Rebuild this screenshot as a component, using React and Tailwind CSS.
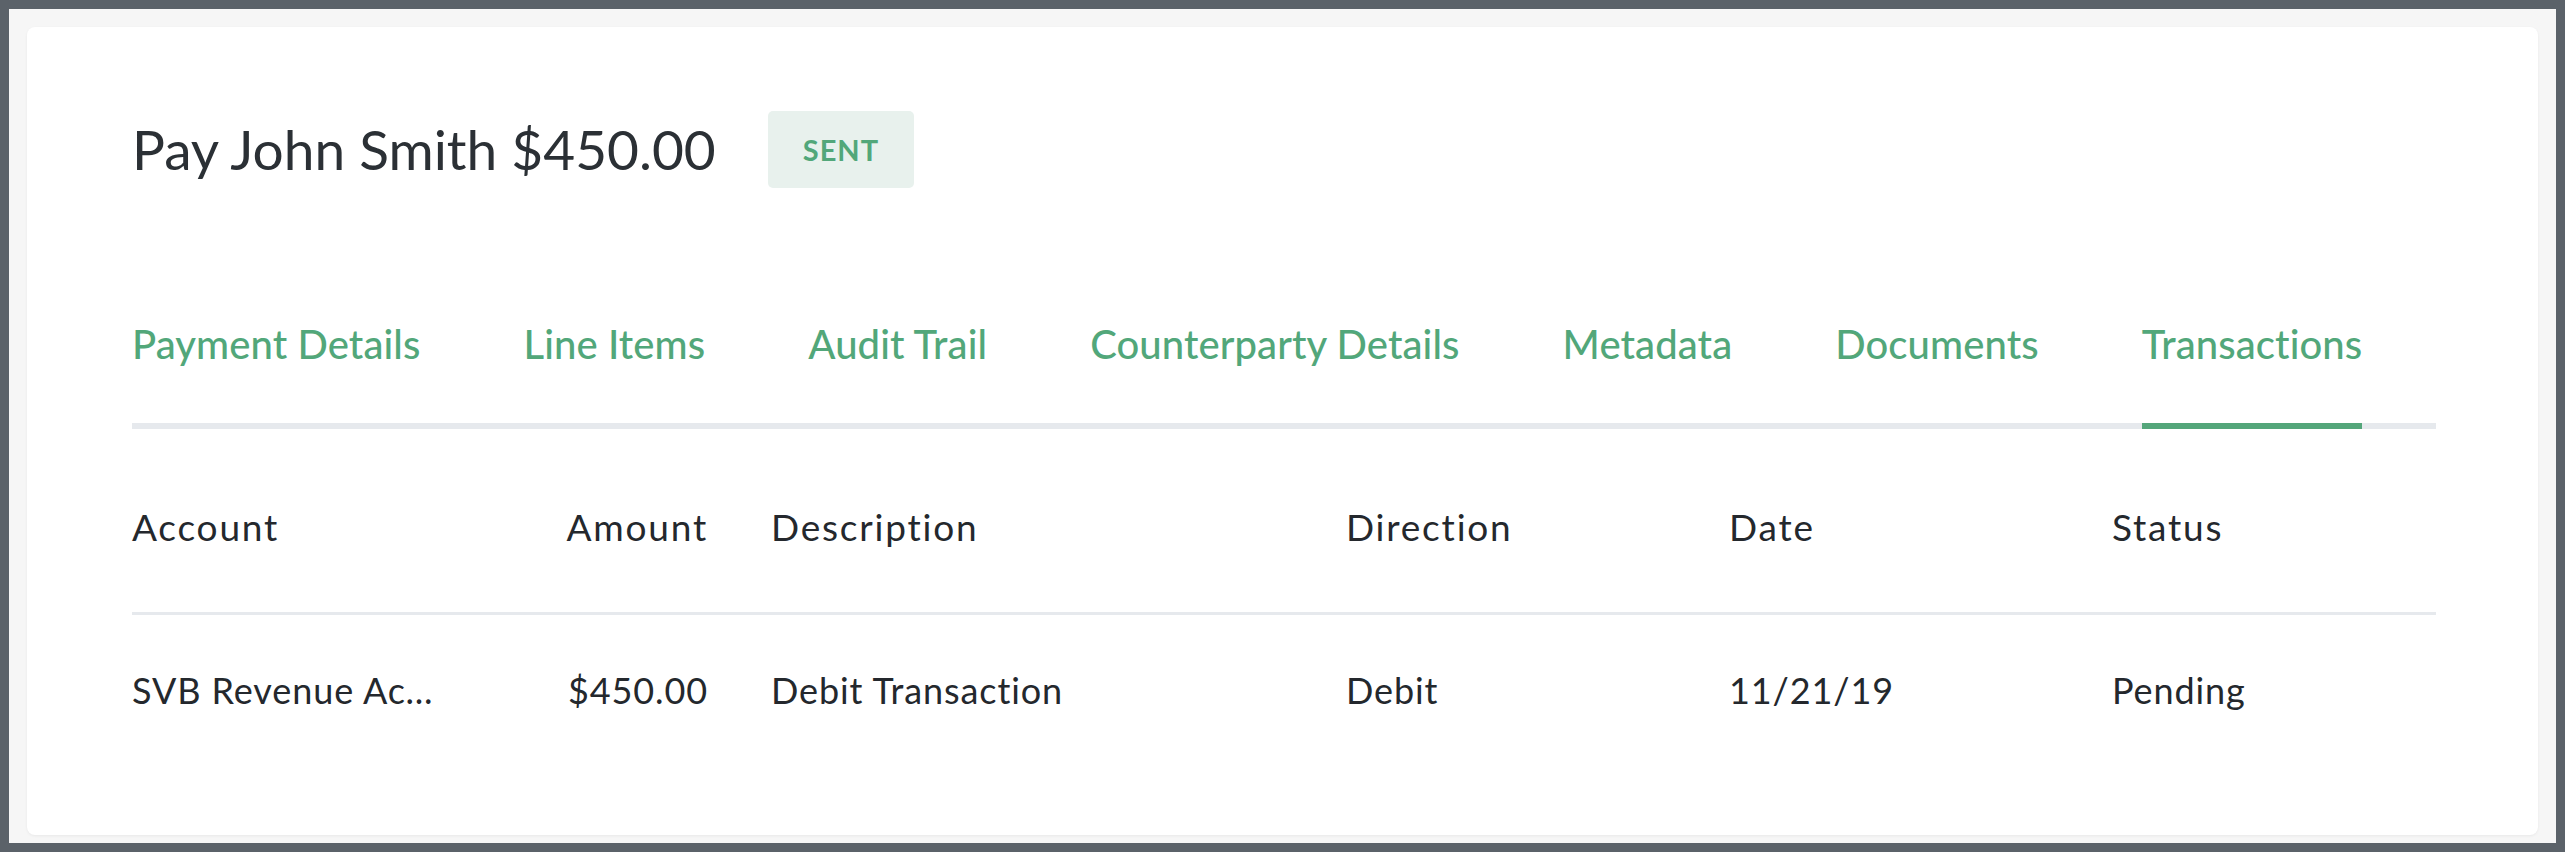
const TABS = [
  "Payment Details",
  "Line Items",
  "Audit Trail",
  "Counterparty Details",
  "Metadata",
  "Documents",
  "Transactions",
];

const COLS = ["Account", "Amount", "Description", "Direction", "Date", "Status"];

const ROWS = [
  {
    account: "SVB Revenue Account",
    amount: "$450.00",
    description: "Debit Transaction",
    direction: "Debit",
    date: "11/21/19",
    status: "Pending",
  },
];

const GRID = "grid grid-cols-[434px_142px_638px_383px_383px_1fr]";

export default function App() {
  return (
    <div
      className="h-[852px] w-full bg-[#5b6269] p-[9px]"
      style={{ fontFamily: "Lato, 'Noto Sans', sans-serif" }}
    >
      <div className="h-full bg-[#f6f6f6] pt-[18px] pl-[18px] pr-[18px] pb-[8px]">
        <div className="h-full rounded-lg bg-white pl-[105px] pr-[102px] pt-[84px] shadow-[0_1px_3px_rgba(0,0,0,0.06)]">
          {/* header */}
          <div className="flex h-[77px] items-center gap-[52px]">
            <h1 className="text-[55px] leading-none font-normal text-[#2b3035]">
              Pay John Smith $450.00
            </h1>
            <span className="flex h-[77px] items-center rounded-[5px] bg-[#e8f1ed] px-[35px] text-[29px] font-bold tracking-[1px] text-[#52a77a]">
              SENT
            </span>
          </div>

          {/* tabs */}
          <nav className="mt-[136px] flex gap-[103px] border-b-[6px] border-[#e6e9ed]">
            {TABS.map((t) => (
              <div
                key={t}
                className={`-mb-[6px] border-b-[6px] pb-[59px] text-[40px] leading-none font-medium tracking-[0.1px] text-[#52a77a] ${
                  t === "Transactions" ? "border-[#54a67a]" : "border-transparent"
                }`}
              >
                {t}
              </div>
            ))}
          </nav>

          {/* table */}
          <div className={`${GRID} mt-[79px] border-b-[3px] border-[#e6e9ed] pb-[67px] text-[37px] leading-none tracking-[1.8px] text-[#24282d]`}>
            {COLS.map((c, i) => (
              <div
                key={c}
                className={i === 1 ? "text-right" : i === 2 ? "pl-[63px]" : ""}
              >
                {c}
              </div>
            ))}
          </div>
          {ROWS.map((r) => (
            <div
              key={r.account}
              className={`${GRID} mt-[57px] text-[36px] leading-none tracking-[0.9px] text-[#24282d]`}
            >
              <div className="w-[314px] truncate">{r.account}</div>
              <div className="text-right">{r.amount}</div>
              <div className="pl-[63px]">{r.description}</div>
              <div>{r.direction}</div>
              <div>{r.date}</div>
              <div>{r.status}</div>
            </div>
          ))}
        </div>
      </div>
    </div>
  );
}
